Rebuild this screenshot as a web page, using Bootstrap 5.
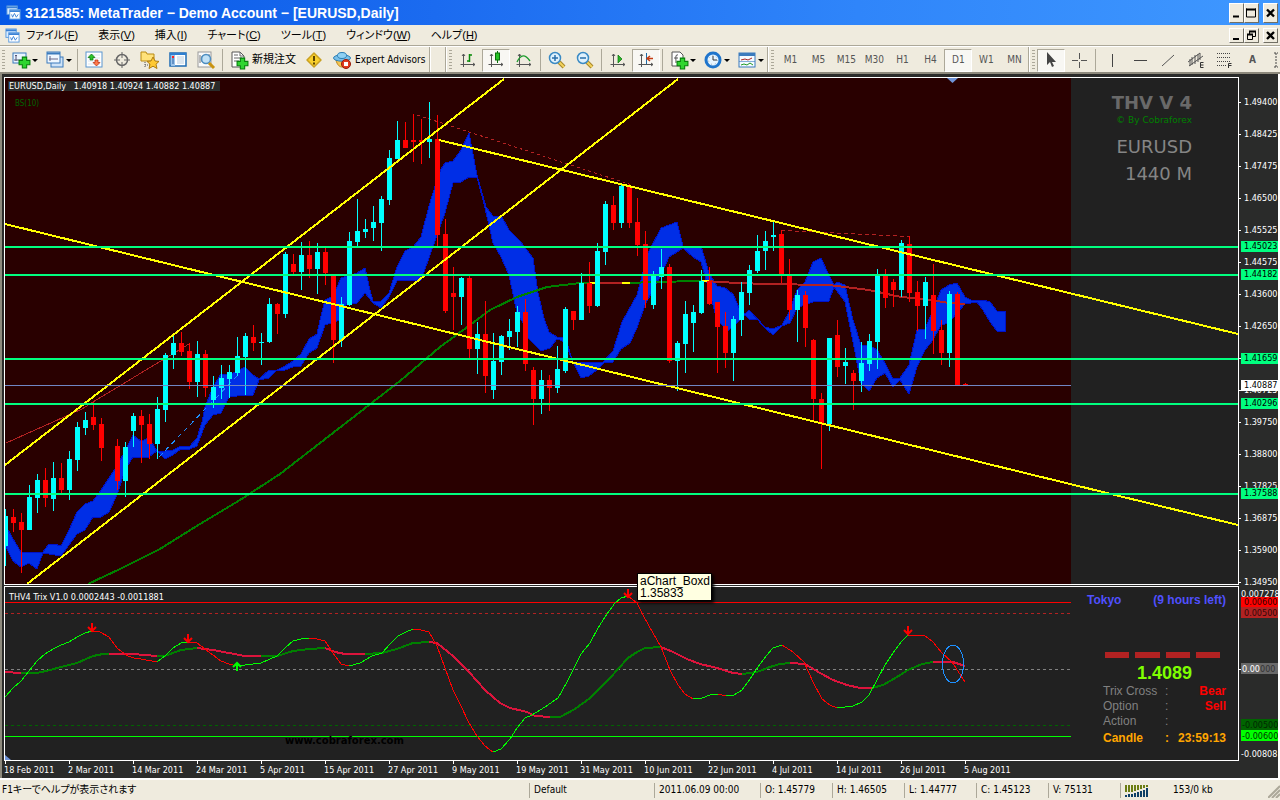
<!DOCTYPE html>
<html lang="ja">
<head>
<meta charset="utf-8">
<meta name="viewport" content="width=device-width, initial-scale=1">
<title>3121585: MetaTrader - Demo Account - [EURUSD,Daily]</title>
<link href="https://cdn.jsdelivr.net/npm/bootstrap@5.3.0/dist/css/bootstrap.min.css" rel="stylesheet">
<style>
:root{--face:#efebde;--edge:#aca899;--ui:"DejaVu Sans Condensed","Noto Sans CJK JP",sans-serif}
body{background:var(--face);color:#000;font-family:var(--ui);font-size:10px;line-height:14px}
button{font:inherit;color:inherit;border:0;background:none;padding:0}
.titlebar{height:25px;background:linear-gradient(90deg,#0558e6,#1b6bf0 34%,#2f85fa 67%,#3f98ff);color:#fff;font:bold 14px/24px "Liberation Sans",sans-serif;padding:0 2px 0 6px}
.menubar{height:21px;padding:0 2px 0 5px;border-bottom:1px solid var(--edge)}
.menubar nav{gap:20px;margin-left:6px}
.menubar nav a{color:#000;text-decoration:none;font:11px/20px "Liberation Sans","Noto Sans CJK JP",sans-serif;font-feature-settings:"palt"}
.winbtn{width:15px;height:20px;background:var(--face);border:1px solid;border-color:#fff #716f64 #716f64 #fff;color:#000}
.winbtn.low{height:15px}
.winbtn svg{display:block}
.toolstrip{height:28px;border-top:1px solid #fff;border-bottom:2px solid #8d897c;padding-top:1px;overflow:hidden}
.tool{width:28px;height:23px;display:flex;align-items:center;justify-content:center;color:#555;flex:none}
.tool.drop{width:34px}
.tool.named{width:auto;color:#000;gap:3px;padding:0 4px}
.tool.named:lang(ja){font-size:10px}
.tool .jp{font-size:11px}
.tool.down{background:#f8f7f3;border:1px solid;border-color:#aca899 #fff #fff #aca899}
.caret{border:3px solid transparent;border-top-color:#000;border-bottom:0;margin-left:1px}
.rule{width:1px;height:22px;background:#aca899;margin:0 2px;flex:none}
.band{width:2px;height:26px;background:#aca899;border-right:1px solid #fff;flex:none}
.spare{width:14px;flex:none}
.grip{width:3px;height:20px;margin:0 2px;background:repeating-linear-gradient(#aca899 0 1px,transparent 1px 3px);flex:none}
.workspace{background:#2a2b2a}
.workspace>svg{display:block;width:100%;height:auto}
.brand{position:absolute;top:19px;right:88px;text-align:right;color:#696969}
.brand h1{font:bold 18px/20px "DejaVu Sans",sans-serif;margin:0 0 2px}
.brand p{margin:0 0 8px;font:9px/10px "DejaVu Sans",sans-serif;color:#008000}
.brand .pair{font:18px/27px "DejaVu Sans",sans-serif;color:#858585}
.desk{position:absolute;top:519px;right:54px;width:139px;font:12px/15px "Liberation Sans",sans-serif;color:#808080}
.session{color:#5050ff;font-weight:bold;margin-bottom:44px}
.meter{gap:6px;margin:0 6px 0 18px}
.meter i{height:6px;flex:1;background:#b22222}
.desk .quote{font-weight:bold;font-size:18px;line-height:22px;color:#7fff00;text-align:center;margin:4px 0 0 16px}
.desk dl{margin:0 0 0 16px;display:grid;grid-template-columns:62px 1fr}
.desk dt{font-weight:normal}
.desk dd{margin:0;display:flex;justify-content:space-between}
.desk b{color:#f00}
.desk .clock,.desk .clock b{color:#ffa500;font-weight:bold}
.desk .clock{margin-top:2px}
.hint{position:absolute;left:637px;top:499px;background:#ffffe1;border:1px solid #000;box-shadow:2px 2px 3px #000;font:12px/12px "Liberation Sans",sans-serif;padding:1px 1px 1px 2px;white-space:nowrap}
.statusbar{height:22px;border-top:2px solid #fff;padding-left:2px}
.statusbar span{border-left:1px solid var(--edge);height:15px;padding-left:4px;flex:none}
.statusbar .help{border:0;padding:0;flex:1;font-feature-settings:"palt"}
.w-profile{width:125px}.w-time{width:106px}.w-price{width:72px}.w-net{width:160px}
svg text{font-family:"DejaVu Sans Condensed",sans-serif;font-size:9px}
</style>
</head>
<body class="d-flex flex-column min-vh-100">
<svg width="0" height="0" class="position-absolute" aria-hidden="true">
<defs>
<symbol id="logo" viewBox="0 0 16 16"><rect x="1" y="1" width="11" height="9" fill="#d9ecff" stroke="#5a9be0"/><path d="M1 2.500h11" stroke="#3b82d6" stroke-width="2"/><rect x="4" y="5" width="11" height="10" fill="#fff" stroke="#5a9be0"/><path d="M4 6.500h11" stroke="#3b82d6" stroke-width="2"/><path d="M6 10l1 3 2-4 2 4 2-3" fill="none" stroke="#3b82d6"/></symbol>
<symbol id="plus" viewBox="0 0 12 12"><path d="M4 1h4v3h3v4H8v3H4V8H1V4h3z" fill="#2fd52f" stroke="#07800c"/></symbol>
<symbol id="newchart" viewBox="0 0 20 20"><rect x="2" y="3" width="13" height="10" fill="#e9f4ff" stroke="#3b7bbd"/><path d="M5 5v6M3 10h9M4 6l1-1 1 1" stroke="#557" fill="none"/><use href="#plus" x="7" y="6" width="13" height="13"/></symbol>
<symbol id="profiles" viewBox="0 0 20 20"><rect x="6" y="7" width="12" height="10" fill="#cfe3f7" stroke="#3b7bbd"/><rect x="2" y="2" width="13" height="11" fill="#eff7ff" stroke="#3b7bbd"/><path d="M2 3.500h13" stroke="#3b7bbd" stroke-width="2"/><path d="M4 9h9M5 6v5" stroke="#668"/></symbol>
<symbol id="market" viewBox="0 0 20 20"><rect x="2" y="2" width="16" height="15" fill="#fff" stroke="#5b96cf"/><path d="M4 5h12M4 8h12M4 11h12M4 14h12" stroke="#dbe6f1"/><path d="M7.500 4l3.500 3.500H9V10H6V7.500H4z" fill="#2cc52c" stroke="#087008" stroke-width=".7"/><path d="M12.500 16l3.500-3.500h-2V10h-3v2.500H9z" fill="#ff7a4a" stroke="#b32a0a" stroke-width=".7"/></symbol>
<symbol id="target" viewBox="0 0 20 20"><circle cx="10" cy="10" r="5.500" fill="none" stroke="#666" stroke-width="1.500"/><path d="M10 2v6M10 12v6M2 10h6M12 10h6" stroke="#666"/></symbol>
<symbol id="navigator" viewBox="0 0 20 20"><path d="M1 4V2h5l1 2h7v7H1z" fill="#ffe27a" stroke="#b98a12"/><path d="M5 12v6M5 15h5" stroke="#555" stroke-dasharray="1 1"/><path d="M13 7l2 4 4 .4-3 2.800 1 4.300-4-2.300-4 2.300 1-4.300-3-2.800 4-.4z" fill="#ffc933" stroke="#b07d10"/></symbol>
<symbol id="terminal" viewBox="0 0 20 20"><rect x="2" y="3" width="16" height="13" fill="#fff" stroke="#1f6cb5" stroke-width="1.500"/><path d="M5 4v12" stroke="#9cc4ea" stroke-width="4"/><path d="M2 4h16" stroke="#2f7fd0" stroke-width="2"/><path d="M9 7h7M9 9h7M9 11h7M9 13h7" stroke="#b8cde0"/><path d="M5 8v6" stroke="#2b5fa0"/><path d="M4 7h2" stroke="#f22" stroke-width="2"/></symbol>
<symbol id="tester" viewBox="0 0 20 20"><rect x="2" y="2" width="13" height="15" fill="#fafafa" stroke="#999"/><path d="M4 5v8M6 6v6M13 4v3" stroke="#777"/><circle cx="10" cy="9" r="4.500" fill="#b5dcf5" fill-opacity=".85" stroke="#4c8dc0" stroke-width="1.500"/><path d="M13 13l5 5" stroke="#c99310" stroke-width="3"/></symbol>
<symbol id="order" viewBox="0 0 20 20"><path d="M3 2h8l4 4v11H3z" fill="#fff" stroke="#555"/><path d="M11 2v4h4M5 5h4M5 8h8M5 11h5" stroke="#666" fill="none"/><use href="#plus" x="7" y="7" width="13" height="13"/></symbol>
<symbol id="warn" viewBox="0 0 20 20"><path d="M10 3l7 7-7 7-7-7z" fill="#f8cf2c" stroke="#c9a022" stroke-width="1.500" stroke-linejoin="round"/><path d="M10 6v5M10 12.500v2" stroke="#5a4300" stroke-width="2"/></symbol>
<symbol id="expert" viewBox="0 0 20 20"><path d="M4 10c2 10 11 9 13-1z" fill="#f5c451" stroke="#b98218"/><ellipse cx="10" cy="8" rx="8.500" ry="3.200" fill="#7ac0e8" stroke="#2b7eb5"/><ellipse cx="10" cy="5.500" rx="4.500" ry="3" fill="#8ed0f3" stroke="#2b7eb5"/><circle cx="14" cy="14" r="4.500" fill="#e23b1f" stroke="#981c0a"/><rect x="12" y="12" width="4" height="4" fill="#fff"/></symbol>
<symbol id="axes" viewBox="0 0 20 20"><path d="M5.500 4v13M3 14.500h14M4 6l1.500-2L7 6M15 13l2 1.500-2 1.500M2.500 14.500h2" fill="none" stroke="#555"/></symbol>
<symbol id="bars" viewBox="0 0 20 20"><use href="#axes"/><path d="M11.500 4v8M9 11h2.500M11.500 5H14" stroke="#0a8a0a" stroke-width="1.500"/></symbol>
<symbol id="candle" viewBox="0 0 20 20"><use href="#axes"/><path d="M11.500 1v12" stroke="#087008"/><rect x="9.500" y="3" width="4" height="7" fill="#26c226" stroke="#087008"/></symbol>
<symbol id="line" viewBox="0 0 20 20"><use href="#axes"/><path d="M3 12c4-8 8-8 13-1" fill="none" stroke="#1a9a2a" stroke-width="1.300"/></symbol>
<symbol id="zoomin" viewBox="0 0 20 20"><path d="M12 12l5 5" stroke="#a8872a" stroke-width="4"/><path d="M12 12l5 5" stroke="#f3d35d" stroke-width="2"/><circle cx="8" cy="8" r="5.500" fill="#dff1fc" stroke="#3a8ac4" stroke-width="1.500"/><path d="M5 8h6M8 5v6" stroke="#2a6faa" stroke-width="1.500"/></symbol>
<symbol id="zoomout" viewBox="0 0 20 20"><path d="M12 12l5 5" stroke="#a8872a" stroke-width="4"/><path d="M12 12l5 5" stroke="#f3d35d" stroke-width="2"/><circle cx="8" cy="8" r="5.500" fill="#dff1fc" stroke="#3a8ac4" stroke-width="1.500"/><path d="M5 8h6" stroke="#2a6faa" stroke-width="1.500"/></symbol>
<symbol id="scroll" viewBox="0 0 20 20"><use href="#axes"/><path d="M10 5v8l4-4z" fill="#28b428" stroke="#087008" stroke-width=".7"/></symbol>
<symbol id="shift" viewBox="0 0 20 20"><use href="#axes"/><path d="M10.500 3v11" stroke="#1d6aa5"/><path d="M17 8.500h-5M14 6l-3 2.500 3 2.500" stroke="#c43b12" stroke-width="1.500" fill="none"/></symbol>
<symbol id="indic" viewBox="0 0 20 20"><path d="M3 2h8l3 3v11H3z" fill="#fff" stroke="#555"/><path d="M9 5c-3-1-2 3-2 8M5 8h4" stroke="#555" fill="none"/><use href="#plus" x="7" y="7" width="13" height="13"/></symbol>
<symbol id="clock" viewBox="0 0 20 20"><circle cx="10" cy="10" r="7" fill="#e7f5ff" stroke="#1f75cc" stroke-width="3"/><circle cx="10" cy="10" r="4.500" fill="none" stroke="#9ab" stroke-dasharray="1 3"/><path d="M10 6v4h4" stroke="#333" fill="none"/></symbol>
<symbol id="template" viewBox="0 0 20 20"><rect x="2" y="3" width="16" height="14" fill="#f4faff" stroke="#3b7bbd"/><path d="M2 4.500h16" stroke="#3b7bbd" stroke-width="3"/><path d="M4 10l4-1 3 1 4-2" stroke="#a22" fill="none"/><path d="M2 11.500h16" stroke="#3b7bbd" stroke-width=".6"/><path d="M4 15l3-1 3 1 3-2 3 2" stroke="#292" fill="none"/></symbol>
<symbol id="cursor" viewBox="0 0 20 20"><path d="M6 2v13l3-3 2 5 2-1-2-4h4z" fill="#444"/></symbol>
<symbol id="cross" viewBox="0 0 20 20"><path d="M10.500 3v6M10.500 12v6M3 10.500h6M12 10.500h6" stroke="#555"/></symbol>
<symbol id="vline" viewBox="0 0 20 20"><path d="M10.500 4v13" stroke="#444"/></symbol>
<symbol id="hline" viewBox="0 0 20 20"><path d="M4 10.500h13" stroke="#444"/></symbol>
<symbol id="trend" viewBox="0 0 20 20"><path d="M4 16L16 5" stroke="#555"/></symbol>
<symbol id="channel" viewBox="0 0 20 20"><path d="M2 12L14 3M3 16L17 6M6 7v8M9 5v9M12 4v8M4 9v7M14 3v7" stroke="#555"/><path d="M17.500 12.500h-3v5h3M14.500 15h3" stroke="#333" fill="none"/></symbol>
<symbol id="fib" viewBox="0 0 20 20"><path d="M3 3.500h14M3 7.500h14M3 11.500h14M3 15.500h9" stroke="#444" stroke-dasharray="1 1"/><path d="M14.500 18v-4.500h3M14.500 15.500h3" stroke="#333" fill="none"/></symbol>
<symbol id="label" viewBox="0 0 20 20"><path d="M4 3h4M6 3v14M4 17h4" stroke="#444" fill="none" stroke-dasharray="2 1"/></symbol>
<symbol id="min" viewBox="0 0 13 13"><path d="M3 10h6" stroke="#000" stroke-width="2"/></symbol>
<symbol id="max" viewBox="0 0 13 13"><path d="M1.500 2v8.500h9V2" fill="none" stroke="#000"/><path d="M1 3h10" stroke="#000" stroke-width="2"/></symbol>
<symbol id="restore" viewBox="0 0 13 13"><path d="M4.500 5V2.500h6v5H8M2.500 5.500h5v5h-5z" fill="none" stroke="#000"/><path d="M4 2.500h7M2 5.500h6" stroke="#000" stroke-width="2"/></symbol>
<symbol id="close" viewBox="0 0 13 13"><path d="M3 3l7 7M10 3l-7 7" stroke="#000" stroke-width="2.300"/></symbol>
</defs>
</svg>

<header class="titlebar d-flex align-items-center">
<svg width="15" height="15" class="me-1"><use href="#logo"/></svg>
<span class="flex-grow-1 text-nowrap">3121585: MetaTrader − Demo Account − [EURUSD,Daily]</span>
<button class="winbtn" aria-label="Minimize"><svg width="13" height="18"><use href="#min"/></svg></button>
<button class="winbtn me-1" aria-label="Maximize"><svg width="13" height="18"><use href="#max"/></svg></button>
<button class="winbtn" aria-label="Close"><svg width="13" height="18"><use href="#close"/></svg></button>
</header>

<div class="menubar d-flex align-items-center">
<svg width="15" height="15"><use href="#logo"/></svg>
<nav class="d-flex flex-grow-1 text-nowrap" aria-label="メニュー">
<a href="#">ファイル(<u>F</u>)</a><a href="#">表示(<u>V</u>)</a><a href="#">挿入(<u>I</u>)</a><a href="#">チャート(<u>C</u>)</a><a href="#">ツール(<u>T</u>)</a><a href="#">ウィンドウ(<u>W</u>)</a><a href="#">ヘルプ(<u>H</u>)</a>
</nav>
<button class="winbtn low" aria-label="Minimize chart"><svg width="13" height="13"><use href="#min"/></svg></button>
<button class="winbtn low me-1" aria-label="Restore chart"><svg width="13" height="13"><use href="#restore"/></svg></button>
<button class="winbtn low" aria-label="Close chart"><svg width="13" height="13"><use href="#close"/></svg></button>
</div>

<div class="toolstrip d-flex align-items-center" role="toolbar" aria-label="Tools"></div>

<main class="workspace position-relative">
<svg id="chart" viewBox="0 74 1280 704" role="img" aria-label="EURUSD daily chart"></svg>
<section class="brand">
<h1>THV V 4</h1>
<p>© By Cobraforex</p>
<div class="pair">EURUSD<br>1440 M</div>
</section>
<section class="desk">
<div class="session d-flex justify-content-between"><span>Tokyo</span><span>(9 hours left)</span></div>
<div class="meter d-flex"><i></i><i></i><i></i><i></i></div>
<div class="quote">1.4089</div>
<dl>
<dt>Trix Cross</dt><dd>:<b>Bear</b></dd>
<dt>Option</dt><dd>:<b>Sell</b></dd>
<dt>Action</dt><dd>:</dd>
<dt class="clock">Candle</dt><dd class="clock">:<b>23:59:13</b></dd>
</dl>
</section>
<div class="hint" role="tooltip">aChart_Boxd<br>1.35833</div>
</main>

<footer class="statusbar d-flex align-items-center text-nowrap">
<span class="help">F1キーでヘルプが表示されます</span>
<span class="w-profile">Default</span>
<span class="w-time">2011.06.09 00:00</span>
<span class="w-price">O: 1.45779</span>
<span class="w-price">H: 1.46505</span>
<span class="w-price">L: 1.44777</span>
<span class="w-price">C: 1.45123</span>
<span class="w-price">V: 75131</span>
<span class="w-net d-flex"><svg width="24" height="14" class="me-4"><path d="M1 2v7M4 2v7M7 2v7M10 2v6M13 2v5M16 2v4M19 2v3M22 2v2" stroke="#6b7d12" stroke-width="2"/><path d="M1 12v2M4 11v3M7 11v3M10 10v4M13 9v5M16 8v6M19 7v7M22 5v9" stroke="#0e3f66" stroke-width="2"/></svg>153/0 kb<svg width="12" height="15" class="ms-auto"><path d="M0 15L12 3M4 15l8-8M8 15l4-4" stroke="#aca899" stroke-width="2"/></svg></span>
</footer>

<script>
// Toolbar: "-" rule, "|" end of a band, ":" grip, "." spare band, "name+" drop-down, "*name" pressed
const strip = document.querySelector('.toolstrip');
const titles = {order:'新規注文', expert:'Expert Advisors'};
const periods = ['M1','M5','M15','M30','H1','H4','D1','W1','MN','A'];
strip.innerHTML = ': newchart+ profiles+ - market target navigator terminal tester - order warn expert | . | : bars *candle line - zoomin zoomout - scroll *shift - indic+ clock+ template+ | : M1 M5 M15 M30 H1 H4 *D1 W1 MN | : *cursor cross - vline hline trend channel fib A label'
.split(' ').map(t => {
  if (t === '-') return '<span class="rule"></span>';
  if (t === '|') return '<span class="band"></span>';
  if (t === ':') return '<span class="grip"></span>';
  if (t === '.') return '<span class="spare"></span>';
  const down = t[0] === '*' ? ' down' : '', drop = t.endsWith('+'), name = t.replace(/[*+]/g, '');
  if (periods.includes(name)) return `<button class="tool${down}">${name === 'A' ? '<b>A</b>' : name}</button>`;
  return `<button class="tool${down}${drop ? ' drop' : ''}${titles[name] ? ' named' : ''}" aria-label="${titles[name] || name}"><svg width="20" height="20"><use href="#${name}"/></svg>${titles[name] ? `<span class="text-nowrap${name === 'order' ? ' jp' : ''}">${titles[name]}</span>` : ''}${drop ? '<span class="caret"></span>' : ''}</button>`;
}).join('');

// Candles, one every 8 units: direction, high, body top, body bottom, low
const candles = `u509 516 546 566,d509 517 523 532,d513 522 530 573,u485 497 530 530,u474 480 498 513,d468 480 498 507,u462 478 499 511,d463 478 490 494,u451 459 490 500,u422 427 460 471,u412 420 428 435,d402 417 425 430,d418 424 448 461,,d439 446 481 490,u442 447 481 497,u413 416 431 447,d410 416 425 463,d414 424 444 459,u397 409 444 459,u353 355 410 422,u335 343 355 369,d332 343 352 356,d343 351 382 389,u341 354 382 397,d350 354 388 397,u376 387 400 408,u365 378 388 399,u365 372 379 398,u337 356 373 376,u333 336 357 395,d325 337 343 351,u333 342 343 365,u298 304 342 343,d303 304 314 334,u252 254 314 318,d254 264 272 275,u242 255 272 290,d241 255 269 278,u243 252 269 294,d247 252 273 285,d275 276 340 363,u297 304 340 347,u232 241 305 306,u199 231 242 246,u219 229 232 238,u206 222 228 241,u196 199 223 251,u150 158 200 205,u121 140 159 159,d122 140 148 148,d114 140 142 162,d119 140 142 164,u102 139 142 158,d115 139 235 246,d219 234 311 313,d267 293 297 330,u277 278 297 325,d275 278 349 358,u322 334 349 374,d301 334 376 393,u333 361 390 399,u335 336 362 375,u319 331 337 350,u306 312 332 347,d299 312 364 371,d367 370 399 425,u370 380 399 414,d375 380 388 411,u346 369 388 393,u307 309 371 373,d311 311 320 330,u273 283 320 320,d262 283 306 313,u243 251 306 307,u201 204 252 265,d196 205 223 230,u183 186 223 228,d184 186 223 228,d198 222 245 256,d231 244 300 308,u271 275 305 309,u249 267 277 289,d264 267 361 363,u341 343 361 391,u301 314 344 373,u305 312 323 352,u270 281 313 314,d267 281 304 305,d302 302 327 373,d312 326 353 368,u316 319 353 381,u282 292 320 336,u265 270 293 305,u235 251 271 273,u231 241 251 270,u221 235 237 251,d230 234 275 283,d259 274 310 320,u290 295 310 342,d291 295 328 347,d339 340 399 420,d393 399 424 469,u338 338 424 431,d320 335 367 377,u348 362 366 384,d370 373 381 410,u342 363 381 392,u334 341 364 371,u269 275 342 369,d269 275 298 308,d279 282 290 307,u240 243 290 297,d236 244 293 302,d281 292 306 331,u277 282 306 339,d264 295 331 354,d320 330 353 365,u291 294 353 367,d292 294 385 386,d383 384 386 386`.split(',');

const cloudTop = '5,524 13,539 21,552 43,552 48,545 54,544 61,546 69,530 77,512 85,504 93,501 101,490 109,478 117,466 125,451 133,435 141,441 149,438 157,451 165,451 173,450 181,446 190,446 197,438 202,422 205,407 213,387 221,374 229,375 237,371 245,367 253,375 259,379 269,370 277,370 285,366 293,361 301,354 309,339 317,334 320,320 325,300 333,296 341,278 357,273 365,268 370,290 373,301 381,301 389,293 397,267 405,251 413,247 421,237 429,206 437,180 441,169 445,163 453,161 461,150 469,133 477,175 486,207 493,216 502,217 509,230 521,242 533,258 538,293 544,318 549,332 557,337 565,337 573,362 603,362 613,351 622,322 637,295 648,253 661,228 669,225 677,222 683,246 701,246 709,273 717,286 725,288 733,294 740,310 745,314 749,310 765,327 773,329 782,325 789,312 797,290 805,282 813,262 821,258 829,275 834,285 837,282 845,285 853,320 861,345 869,345 877,350 885,363 893,379 900,378 909,365 917,330 925,329 933,310 941,290 949,285 957,283 965,297 973,301 983,300 990,302 997,311 1005,311';
const cloudLow = '5,545 13,561 21,567 29,563 37,569 43,553 61,556 69,545 77,534 85,530 93,517 101,517 109,512 117,495 125,470 133,457 149,457 157,451 165,459 173,455 181,449 190,449 197,446 205,425 213,415 221,413 229,397 237,396 253,395 259,380 269,378 277,370 285,370 293,367 301,366 309,353 317,348 325,325 340,320 347,303 357,303 365,293 373,303 381,308 389,297 397,281 421,280 429,258 437,235 445,213 453,183 461,182 469,177 477,177 485,208 493,243 501,257 509,275 517,313 523,323 528,338 541,351 550,348 557,339 565,342 573,362 581,378 589,376 597,370 605,362 613,362 621,349 630,343 637,328 645,305 653,290 661,275 669,257 677,252 683,248 693,257 701,262 709,290 717,320 728,331 740,320 745,315 749,319 757,319 765,328 773,335 782,326 790,323 797,308 813,302 829,301 834,287 845,302 853,342 861,383 869,391 877,378 885,373 893,387 900,380 909,394 917,367 925,350 933,340 941,325 949,323 957,313 965,304 977,302 983,310 990,322 997,331 1005,331';

const ln = (pts, color, w = 1, extra = '') => `<polyline points="${pts}" fill="none" stroke="${color}" stroke-width="${w}" ${extra}/>`;
const box = (x, y, w, h, c) => `<rect x="${x}" y="${y}" width="${w}" height="${h}" fill="${c}"/>`;
const txt = (x, y, s, c = '#fff', extra = '') => `<text x="${x}" y="${y}" fill="${c}" ${extra}>${s}</text>`;
const crisp = 'shape-rendering="crispEdges"';
// Colour-coded runs: each run starts where the previous one ends
const runs = (s, w) => { let last = ''; return s.split('|').map(r => { const i = r.indexOf(' '), p = r.slice(i + 1); const o = ln(last + ' ' + p, r.slice(0, i), w, crisp); last = p.split(' ').pop(); return o; }).join(''); };

let g = box(0, 74, 2, 704, '#8d897c') + box(5, 78, 1233, 506, '#212121') + box(5, 78, 1066, 506, '#290000') + box(5, 587, 1233, 173, '#212121');
g += `<polygon points="${cloudTop} ${cloudLow.split(' ').reverse().join(' ')}" fill="#002ee6" stroke="#0012c8" ${crisp}/>`;
g += ln('6,443 82,409 93,402 189,344', '#b22222', 1, crisp) + ln('159,457 237,376', '#1e90ff', 1, 'stroke-dasharray="5 4" ' + crisp);
g += ln('417,115 629,184', '#b22222', 1, 'stroke-dasharray="3 3" ' + crisp) + ln('781,230.5 845,233.5 909,236.500', '#b22222', 1, 'stroke-dasharray="4 3" ' + crisp);
g += runs('#008000 88,584 120,569 160,549 200,524 240,500 280,474 320,443 360,412 400,381 440,347 470,325 490,310 517,297 547,287 580,283 589,283|#ffff00 598,283|#b22222 622,283|#ffff00 630,283|#008000 653,282 701,281|#ffff00 709,281|#b22222 717,282 765,284 829,285 869,290 901,297 925,299 949,303 965,304', 2);
candles.forEach((c, i) => {
  if (!c) return;
  const [h, t, b, l] = c.slice(1).split(' ').map(Number), k = c[0] === 'u' ? '#00ffff' : '#ff0000', x = 5 + 8 * i;
  g += box(x, h, 1, Math.max(l - h, 1), k) + (i ? box(x - 2, t, 5, b - t, k) : box(5, t, 3, b - t, k));
});
['5,465 504,79', '27,584 678,79', '5,224 1238,525', '439,140 1238,334'].forEach(p => g += ln(p, '#ffff00', 2, crisp));
[247, 275, 359, 404, 494].forEach(y => g += box(5, y - 1, 1233, 2, '#00ff7f'));
g += box(5, 385, 1066, 1, '#7086c4') + '<path d="M947 78h11l-5.500 5z" fill="#7094d8"/>';

// Trix window
g += box(5, 602, 1066, 1, '#ff0000') + box(5, 736, 1066, 1, '#00ff00');
[[613.5, '#b22222'], [669.5, '#808080'], [725.5, '#006400']].forEach(([y, c]) => g += ln(`5,${y} 1071,${y}`, c, 1, 'stroke-dasharray="3 3" ' + crisp));
g += runs('#dc143c 5,672 21,673|#008000 37,673 50,670 61,667 77,663 93,656 103,654 109,654|#dc143c 133,654 157,656|#008000 165,656 181,650 197,648|#dc143c 213,650 229,653 245,656 261,656|#008000 277,656 293,651 309,649 325,648|#dc143c 335,652 345,654 365,654|#008000 382,653 397,649 413,643 429,642|#dc143c 437,643 453,656 469,672 485,690 500,703 510,708 527,712 535,716 550,717|#008000 560,717 575,709 590,698 610,678 628,658 637,652 645,648 661,647|#dc143c 673,652 687,659 700,664 717,668 733,673 742,674|#008000 757,672 770,667 780,664 790,663|#dc143c 805,664 820,673 833,680 847,685 860,688 872,688|#008000 883,685 897,677 908,670 922,664 933,662|#dc143c 953,662 965,666', 2);
g += runs('#00ff00 5,697 13,688 21,681 29,671 37,661 45,654 53,649 61,645 69,642 77,637 85,633 92,631|#ff0000 100,632 109,637 118,649 128,656 134,658 141,659 157,662|#00ff00 165,656 173,648 181,643 188,642|#ff0000 197,643 205,649 213,655 221,661 229,664 237,666|#00ff00 253,664 261,663 277,656 285,648 293,641 301,639 309,638|#ff0000 317,639 325,641 333,653 341,664 349,666|#00ff00 360,663 372,656 382,653 390,644 398,636 406,632 413,629|#ff0000 421,630 429,632 437,646 445,668 453,690 461,706 469,723 477,736 485,746 493,752|#00ff00 501,749 510,739 517,728 525,718 532,715 545,707 558,698 567,682 574,668 581,654 590,643 598,628 607,614 615,603 621,598 628,596|#ff0000 637,603 643,615 653,633 661,647 670,670 678,685 685,694 693,699|#00ff00 702,698 710,695 718,694|#ff0000 726,696|#00ff00 734,695 742,690 750,679 758,667 767,655 773,648 782,645|#ff0000 793,652 804,662 813,682 822,699 830,705 837,708|#00ff00 853,706 862,702 869,695 877,680 885,665 893,653 902,641 908,635|#ff0000 924,635 933,642 942,653 952,662 965,682', 1);
[[92, 631], [188, 642], [628, 597], [908, 634]].forEach(([x, y]) => g += `<path d="M${x} ${y - 8}v8m-4-4l4 4 4-4" fill="none" stroke="#ff0000" stroke-width="2"/>`);
g += '<path d="M237 671v-7m-4 3l4-4 4 4" fill="none" stroke="#00ff00" stroke-width="2"/>';
g += `<ellipse cx="953" cy="664" rx="10.500" ry="19" fill="none" stroke="#1e90ff" ${crisp}/>`;
g += txt(285, 744, 'www.cobraforex.com', '#000', 'style="font:bold 10px \'DejaVu Sans\',sans-serif"');
g += '<path d="M5 755v5h6z" fill="#7094d8"/>';

// Frames and captions
g += box(4, 77, 1235, 1, '#fff') + box(4, 77, 1, 508, '#fff') + box(4, 584, 1235, 1, '#fff') + box(4, 586, 1235, 1, '#fff') + box(4, 586, 1, 175, '#fff') + box(4, 760, 1235, 1, '#fff') + box(1238, 77, 1, 508, '#fff') + box(1238, 586, 1, 175, '#fff');
g += box(8, 81, 212, 10, '#2a2b2a') + txt(9, 89, 'EURUSD,Daily&#160;&#160; 1.40918 1.40924 1.40882 1.40887') + txt(15, 106, 'BS(10)', '#006400', 'style="font-size:8px"') + txt(9, 600, 'THV4 Trix V1.0 0.0002443 -0.0011881');

'1.49400 1.48425 1.47475 1.46500 1.45525 1.44575 1.43600 1.42650 _ 1.40725 1.39750 1.38800 1.37825 1.36875 1.35900 1.34950'.split(' ').forEach((v, i) => { const y = 102 + 32 * i; g += box(1239, y, 2, 1, '#fff') + (v === '_' ? '' : txt(1244, y + 3, v)); });
[[246, '1.45023'], [274, '1.44182'], [358, '1.41659'], [403, '1.40296'], [493, '1.37588'], [385, '1.40887', '#fff']].forEach(([y, v, c]) => g += box(1241, y - 5, 37, 11, c || '#00ff7f') + txt(1244, y + 3, v, '#000'));
g += txt(1241, 597, '0.007278') + box(1241, 597, 37, 10, '#ff0000') + txt(1244, 605, '0.00600', '#330000') + box(1241, 607, 37, 11, '#b22222') + txt(1244, 616, '0.00500', '#300808');
g += box(1239, 669, 2, 1, '#fff') + box(1241, 663, 37, 11, '#696969') + txt(1242, 672, '0.00<tspan fill="#333">000</tspan>') + box(1241, 719, 37, 11, '#006400') + txt(1242, 728, '-0.00500', '#022802') + box(1241, 730, 37, 11, '#00ff00') + txt(1242, 739, '-0.00600', '#003300') + txt(1241, 757, '-0.00808');
g += box(1278, 74, 2, 704, '#fff');
'18 Feb 2011,2 Mar 2011,14 Mar 2011,24 Mar 2011,5 Apr 2011,15 Apr 2011,27 Apr 2011,9 May 2011,19 May 2011,31 May 2011,10 Jun 2011,22 Jun 2011,4 Jul 2011,14 Jul 2011,26 Jul 2011,5 Aug 2011'.split(',').forEach((d, i) => { const x = 5 + 64 * i; g += box(x, 761, 1, 3, '#fff') + txt(x - 1, 773, d); });
document.getElementById('chart').innerHTML = g;
</script>
<script src="https://cdn.jsdelivr.net/npm/bootstrap@5.3.0/dist/js/bootstrap.bundle.min.js"></script>
</body>
</html>
